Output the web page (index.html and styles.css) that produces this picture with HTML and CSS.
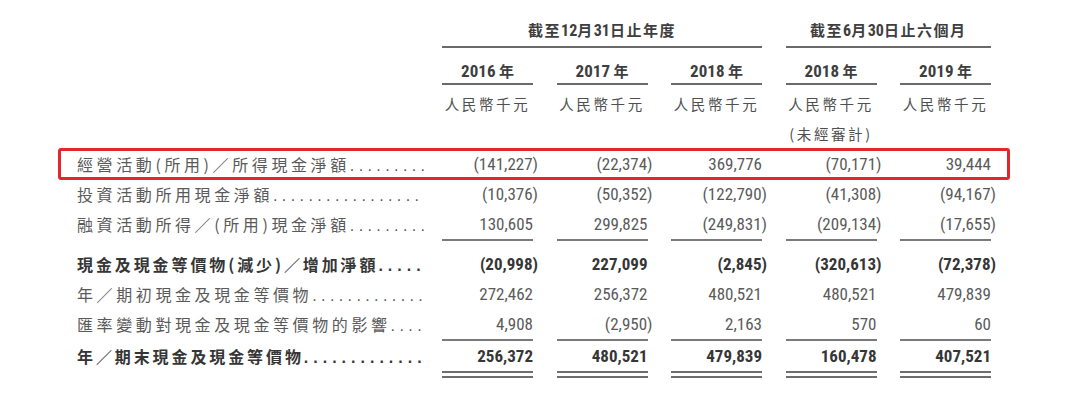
FILE: index.html
```html
<!DOCTYPE html>
<html lang="zh-Hant">
<head>
<meta charset="utf-8">
<title>現金流量</title>
<link rel="stylesheet" href="styles.css">
</head>
<body>
<div class="table">
  <div class="row head">
    <div></div>
    <div class="group g3">截至<span class="n">12</span>月<span class="n">31</span>日止年度</div>
    <div class="group g2">截至<span class="n">6</span>月<span class="n">30</span>日止六個月</div>
  </div>
  <div class="row years">
    <div></div>
    <div class="yr"><span class="n">2016</span> 年</div>
    <div class="yr"><span class="n">2017</span> 年</div>
    <div class="yr"><span class="n">2018</span> 年</div>
    <div class="yr"><span class="n">2018</span> 年</div>
    <div class="yr"><span class="n">2019</span> 年</div>
  </div>
  <div class="row units">
    <div></div>
    <div class="unit">人民幣千元</div>
    <div class="unit">人民幣千元</div>
    <div class="unit">人民幣千元</div>
    <div class="unit">人民幣千元<br>(未經審計)</div>
    <div class="unit">人民幣千元</div>
  </div>

  <div class="row data hl">
    <div class="label">經營活動(所用)／所得現金淨額<span class="dots">.........</span></div>
    <div class="num"><span class="neg">(141,227)</span></div>
    <div class="num"><span class="neg">(22,374)</span></div>
    <div class="num">369,776</div>
    <div class="num"><span class="neg">(70,171)</span></div>
    <div class="num">39,444</div>
  </div>
  <div class="row data">
    <div class="label">投資活動所用現金淨額<span class="dots">.................</span></div>
    <div class="num"><span class="neg">(10,376)</span></div>
    <div class="num"><span class="neg">(50,352)</span></div>
    <div class="num"><span class="neg">(122,790)</span></div>
    <div class="num"><span class="neg">(41,308)</span></div>
    <div class="num"><span class="neg">(94,167)</span></div>
  </div>
  <div class="row data sub">
    <div class="label">融資活動所得／(所用)現金淨額<span class="dots">.........</span></div>
    <div class="num">130,605</div>
    <div class="num">299,825</div>
    <div class="num"><span class="neg">(249,831)</span></div>
    <div class="num"><span class="neg">(209,134)</span></div>
    <div class="num"><span class="neg">(17,655)</span></div>
  </div>
  <div class="row data bold after-sub">
    <div class="label">現金及現金等價物(減少)／增加淨額<span class="dots">.....</span></div>
    <div class="num"><span class="neg">(20,998)</span></div>
    <div class="num">227,099</div>
    <div class="num"><span class="neg">(2,845)</span></div>
    <div class="num"><span class="neg">(320,613)</span></div>
    <div class="num"><span class="neg">(72,378)</span></div>
  </div>
  <div class="row data">
    <div class="label">年／期初現金及現金等價物<span class="dots">.............</span></div>
    <div class="num">272,462</div>
    <div class="num">256,372</div>
    <div class="num">480,521</div>
    <div class="num">480,521</div>
    <div class="num">479,839</div>
  </div>
  <div class="row data sub">
    <div class="label">匯率變動對現金及現金等價物的影響<span class="dots">....</span></div>
    <div class="num">4,908</div>
    <div class="num"><span class="neg">(2,950)</span></div>
    <div class="num">2,163</div>
    <div class="num">570</div>
    <div class="num">60</div>
  </div>
  <div class="row data bold total">
    <div class="label">年／期末現金及現金等價物<span class="dots">.............</span></div>
    <div class="num">256,372</div>
    <div class="num">480,521</div>
    <div class="num">479,839</div>
    <div class="num">160,478</div>
    <div class="num">407,521</div>
  </div>
</div>
</body>
</html>
```

FILE: styles.css
```css
html, body {
  margin: 0;
  background: #ffffff;
}

body {
  font-family: "Noto Sans CJK TC", "Noto Sans CJK SC", sans-serif;
  color: #5a5a5a;
  width: 1080px;
  height: 401px;
  overflow: hidden;
}

.table {
  padding-top: 20px;
}

.row {
  display: grid;
  grid-template-columns: 341.5px repeat(5, 91px);
  column-gap: 23.5px;
  padding-left: 77px;
}

.n {
  font-family: "Liberation Sans Narrow", "Roboto Condensed", "DejaVu Sans Condensed", "Liberation Sans", sans-serif;
}

/* header groups */
.group {
  text-align: center;
  font-size: 15px;
  font-weight: bold;
  color: #3e3e3e;
  letter-spacing: 1.5px;
  line-height: 20px;
  padding-bottom: 5px;
  border-bottom: 2px solid #6a6a6a;
}
.group .n {
  font-size: 16px;
  letter-spacing: 0;
}
.g3 { grid-column: span 3; }
.g2 { grid-column: span 2; }

/* years */
.years {
  margin-top: 13px;
}
.yr {
  text-align: center;
  font-size: 15px;
  font-weight: bold;
  color: #3e3e3e;
  line-height: 20px;
  padding-bottom: 2px;
  border-bottom: 2px solid #6a6a6a;
}
.yr .n {
  font-size: 17px;
}

/* currency units */
.units {
  padding-top: 4px;
}
.unit {
  text-align: center;
  font-size: 14.5px;
  letter-spacing: 2.6px;
  line-height: 30px;
  color: #505050;
}

/* data rows */
.data {
  line-height: 30px;
  height: 30px;
}
.label {
  font-size: 16px;
  letter-spacing: 3.6px;
  white-space: nowrap;
}
.label .dots {
  letter-spacing: 4.4px;
  font-family: "Liberation Sans", sans-serif;
}
.num {
  text-align: right;
  font-family: "Liberation Sans Narrow", "Roboto Condensed", "DejaVu Sans Condensed", "Liberation Sans", sans-serif;
  font-size: 17px;
  white-space: nowrap;
}
.neg {
  display: inline-block;
  margin-right: -5px;
}

.bold {
  font-weight: bold;
  color: #363636;
}
.bold .label {
  letter-spacing: 2.9px;
}
.bold .label .dots {
  letter-spacing: 5px;
}

.sub {
  height: 32px;
}
.sub .num {
  border-bottom: 2px solid #7a7a7a;
}

.after-sub {
  padding-top: 8px;
}

.total .num {
  border-bottom: 7px double #6e6e6e;
  height: 30px;
}

/* red highlight annotation */
.hl {
  position: relative;
}
.hl::after {
  content: "";
  position: absolute;
  left: 58px;
  right: 70px;
  top: -1px;
  bottom: -1px;
  border: 3px solid #e3262b;
  border-radius: 3px;
  pointer-events: none;
}
```
